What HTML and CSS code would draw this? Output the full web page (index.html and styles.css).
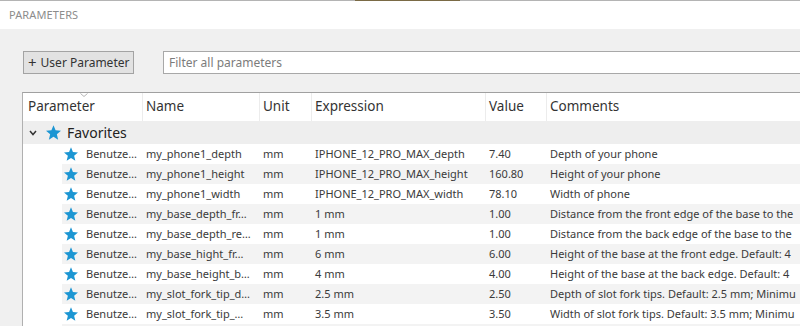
FILE: index.html
```html
<!DOCTYPE html>
<html>
<head>
  <title>Parameters</title>
  <link rel="stylesheet" href="styles.css">
</head>
<body>
  <!-- thin edge of the window behind -->
  <div class="topline"><span class="topline-gap"></span><span class="topline-img"></span></div>

  <div class="titlebar">PARAMETERS</div>

  <div class="panel">
    <div class="toolbar">
      <button class="add-btn"><span class="plus">+</span>User Parameter</button>
      <input class="filter" type="text" placeholder="Filter all parameters">
    </div>

    <div class="table">
      <div class="row head">
        <div class="cell first">Parameter
          <svg class="sort" width="8" height="4" viewBox="0 0 8 4"><polyline points="0.5,0.5 4,3.5 7.5,0.5" fill="none" stroke="#b5b5b5" stroke-width="1"/></svg>
        </div>
        <div class="cell">Name</div>
        <div class="cell">Unit</div>
        <div class="cell">Expression</div>
        <div class="cell">Value</div>
        <div class="cell">Comments</div>
      </div>

      <div class="group">
        <svg class="chev" width="8" height="6" viewBox="0 0 8 6"><polyline points="1,1 4,4.5 7,1" fill="none" stroke="#333" stroke-width="1.5"/></svg>
        <svg class="star" width="15" height="15" viewBox="1.5 1.5 21 20.2"><polygon points="12,1.5 14.9,8.6 22.5,9.2 16.7,14.2 18.5,21.7 12,17.6 5.5,21.7 7.3,14.2 1.5,9.2 9.1,8.6"/></svg>
        <span class="group-name">Favorites</span>
      </div>

      <div class="row item">
        <div class="cell first"><svg class="star" width="14" height="14" viewBox="1.5 1.5 21 20.2"><polygon points="12,1.5 14.9,8.6 22.5,9.2 16.7,14.2 18.5,21.7 12,17.6 5.5,21.7 7.3,14.2 1.5,9.2 9.1,8.6"/></svg><span>Benutze…</span></div>
        <div class="cell">my_phone1_depth</div>
        <div class="cell">mm</div>
        <div class="cell">IPHONE_12_PRO_MAX_depth</div>
        <div class="cell">7.40</div>
        <div class="cell">Depth of your phone</div>
      </div>
      <div class="row item">
        <div class="cell first"><svg class="star" width="14" height="14" viewBox="1.5 1.5 21 20.2"><polygon points="12,1.5 14.9,8.6 22.5,9.2 16.7,14.2 18.5,21.7 12,17.6 5.5,21.7 7.3,14.2 1.5,9.2 9.1,8.6"/></svg><span>Benutze…</span></div>
        <div class="cell">my_phone1_height</div>
        <div class="cell">mm</div>
        <div class="cell">IPHONE_12_PRO_MAX_height</div>
        <div class="cell">160.80</div>
        <div class="cell">Height of your phone</div>
      </div>
      <div class="row item">
        <div class="cell first"><svg class="star" width="14" height="14" viewBox="1.5 1.5 21 20.2"><polygon points="12,1.5 14.9,8.6 22.5,9.2 16.7,14.2 18.5,21.7 12,17.6 5.5,21.7 7.3,14.2 1.5,9.2 9.1,8.6"/></svg><span>Benutze…</span></div>
        <div class="cell">my_phone1_width</div>
        <div class="cell">mm</div>
        <div class="cell">IPHONE_12_PRO_MAX_width</div>
        <div class="cell">78.10</div>
        <div class="cell">Width of phone</div>
      </div>
      <div class="row item">
        <div class="cell first"><svg class="star" width="14" height="14" viewBox="1.5 1.5 21 20.2"><polygon points="12,1.5 14.9,8.6 22.5,9.2 16.7,14.2 18.5,21.7 12,17.6 5.5,21.7 7.3,14.2 1.5,9.2 9.1,8.6"/></svg><span>Benutze…</span></div>
        <div class="cell">my_base_depth_fr…</div>
        <div class="cell">mm</div>
        <div class="cell">1 mm</div>
        <div class="cell">1.00</div>
        <div class="cell">Distance from the front edge of the base to the</div>
      </div>
      <div class="row item">
        <div class="cell first"><svg class="star" width="14" height="14" viewBox="1.5 1.5 21 20.2"><polygon points="12,1.5 14.9,8.6 22.5,9.2 16.7,14.2 18.5,21.7 12,17.6 5.5,21.7 7.3,14.2 1.5,9.2 9.1,8.6"/></svg><span>Benutze…</span></div>
        <div class="cell">my_base_depth_re…</div>
        <div class="cell">mm</div>
        <div class="cell">1 mm</div>
        <div class="cell">1.00</div>
        <div class="cell">Distance from the back edge of the base to the</div>
      </div>
      <div class="row item">
        <div class="cell first"><svg class="star" width="14" height="14" viewBox="1.5 1.5 21 20.2"><polygon points="12,1.5 14.9,8.6 22.5,9.2 16.7,14.2 18.5,21.7 12,17.6 5.5,21.7 7.3,14.2 1.5,9.2 9.1,8.6"/></svg><span>Benutze…</span></div>
        <div class="cell">my_base_hight_fr…</div>
        <div class="cell">mm</div>
        <div class="cell">6 mm</div>
        <div class="cell">6.00</div>
        <div class="cell">Height of the base at the front edge. Default: 4</div>
      </div>
      <div class="row item">
        <div class="cell first"><svg class="star" width="14" height="14" viewBox="1.5 1.5 21 20.2"><polygon points="12,1.5 14.9,8.6 22.5,9.2 16.7,14.2 18.5,21.7 12,17.6 5.5,21.7 7.3,14.2 1.5,9.2 9.1,8.6"/></svg><span>Benutze…</span></div>
        <div class="cell">my_base_height_b…</div>
        <div class="cell">mm</div>
        <div class="cell">4 mm</div>
        <div class="cell">4.00</div>
        <div class="cell">Height of the base at the back edge. Default: 4</div>
      </div>
      <div class="row item">
        <div class="cell first"><svg class="star" width="14" height="14" viewBox="1.5 1.5 21 20.2"><polygon points="12,1.5 14.9,8.6 22.5,9.2 16.7,14.2 18.5,21.7 12,17.6 5.5,21.7 7.3,14.2 1.5,9.2 9.1,8.6"/></svg><span>Benutze…</span></div>
        <div class="cell">my_slot_fork_tip_d…</div>
        <div class="cell">mm</div>
        <div class="cell">2.5 mm</div>
        <div class="cell">2.50</div>
        <div class="cell">Depth of slot fork tips. Default: 2.5 mm; Minimu</div>
      </div>
      <div class="row item">
        <div class="cell first"><svg class="star" width="14" height="14" viewBox="1.5 1.5 21 20.2"><polygon points="12,1.5 14.9,8.6 22.5,9.2 16.7,14.2 18.5,21.7 12,17.6 5.5,21.7 7.3,14.2 1.5,9.2 9.1,8.6"/></svg><span>Benutze…</span></div>
        <div class="cell">my_slot_fork_tip_…</div>
        <div class="cell">mm</div>
        <div class="cell">3.5 mm</div>
        <div class="cell">3.50</div>
        <div class="cell">Width of slot fork tips. Default: 3.5 mm; Minimu</div>
      </div>
      <div class="row item"></div>
    </div>
  </div>
</body>
</html>
```

FILE: styles.css
```css
html, body {
  margin: 0;
  padding: 0;
  height: 326px;
  overflow: hidden;
}

body {
  background-color: #f0f0f0;
  font-family: "Noto Sans", "Open Sans", sans-serif;
  color: #3a3a3a;
}

/* 1px edge of whatever is behind the dialog */
.topline {
  display: flex;
  height: 1px;
  background-color: #b4b4b4;
}

.topline-gap {
  width: 355px;
}

.topline-img {
  width: 105px;
  background-color: #7a6a45;
}

.titlebar {
  height: 28px;
  line-height: 27px;
  padding-left: 9px;
  background-color: #fff;
  font-size: 11px;
  color: #8c8c8c;
  letter-spacing: 0.1px;
}

.panel {
  width: 800px;
  overflow: hidden;
}

.toolbar {
  display: flex;
  align-items: center;
  gap: 29px;
  padding: 22px 0 0 23px;
  height: 23px;
  margin-right: -30px;
}

.add-btn {
  box-sizing: border-box;
  height: 23px;
  width: 111px;
  padding: 0 0 0 4px;
  display: flex;
  align-items: center;
  background-color: #e2e2e2;
  border: 1px solid #a3a3a3;
  font-family: inherit;
  font-size: 12px;
  color: #333;
  text-align: left;
}

.add-btn .plus {
  font-size: 15px;
  line-height: 1;
  margin-right: 4px;
  margin-top: -1px;
}

.filter {
  box-sizing: border-box;
  flex: 1;
  height: 23px;
  padding: 0 5px;
  border: 1px solid #a8a8a8;
  background-color: #fff;
  font-family: inherit;
  font-size: 12px;
  outline: none;
}

.filter::placeholder {
  color: #7c7c7c;
}

/* the grid of parameters */
.table {
  margin: 18px -30px 0 22px;
  border-top: 1px solid #a0a0a0;
  border-left: 1px solid #b0b0b0;
  background-color: #fff;
}

.row {
  display: grid;
  grid-template-columns: 119px 117px 52px 174px 61px 1fr;
}

.cell {
  padding-left: 3px;
  white-space: nowrap;
  overflow: hidden;
}

.head {
  height: 28px;
  align-items: center;
  font-size: 13.5px;
  color: #333;
}

.head .cell {
  height: 28px;
  line-height: 27px;
  border-left: 1px solid #ececec;
  position: relative;
  overflow: visible;
}

.head .cell.first {
  border-left: none;
  padding-left: 5px;
}

.sort {
  position: absolute;
  left: 57px;
  top: 0;
}

.group {
  height: 23px;
  display: flex;
  align-items: center;
  background-color: #eeeeee;
  font-size: 14px;
  color: #222;
}

.group .chev {
  margin-left: 6px;
}

.group .star {
  margin-left: 9px;
}

.group-name {
  margin-left: 6px;
}

.star polygon {
  fill: #1c96d3;
}

.item {
  height: 20px;
  line-height: 20px;
  font-size: 11px;
  color: #3a3a3a;
  background-color: #fff;
}

.item:nth-of-type(even) {
  background: linear-gradient(to right, #fff 39px, #f3f3f3 39px);
}

.item .cell {
  padding-left: 4px;
}

.item .cell.first {
  display: flex;
  align-items: center;
  padding-left: 41px;
}

.item .star {
  flex: none;
  margin-right: 8px;
}
```
